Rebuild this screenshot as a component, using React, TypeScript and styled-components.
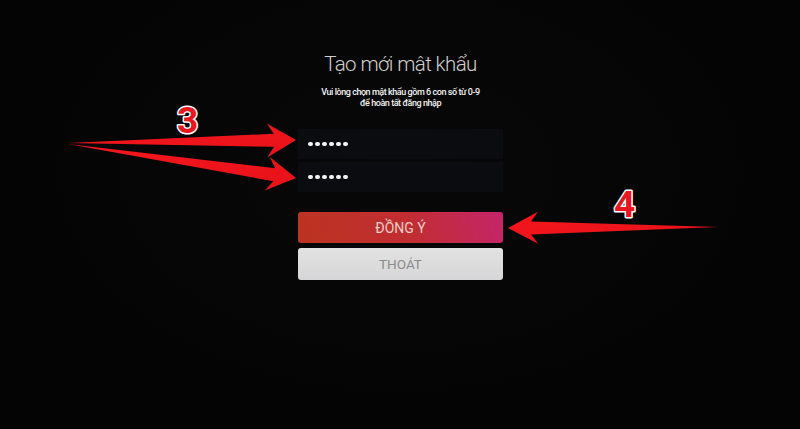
import React from 'react'
import styled, { createGlobalStyle } from 'styled-components'

const GlobalStyle = createGlobalStyle`
  html, body {
    margin: 0;
    padding: 0;
    background: #040404;
  }
  body {
    font-family: Roboto, "Noto Sans", sans-serif;
  }
`

const Screen = styled.div`
  position: relative;
  width: 800px;
  height: 429px;
  overflow: hidden;
  background: radial-gradient(ellipse at 50% 40%, #080808 0%, #040404 70%);
  display: flex;
  flex-direction: column;
  align-items: center;
  padding-top: 50px;
  box-sizing: border-box;
`

const Panel = styled.div`
  width: 205px;
  display: flex;
  flex-direction: column;
  align-items: center;
  margin-left: 1px;
`

const Title = styled.h1`
  margin: 0;
  font-size: 20.5px;
  font-weight: 300;
  line-height: 28px;
  letter-spacing: -0.6px;
  color: #cfcfcf;
  white-space: nowrap;
`

const Subtitle = styled.p`
  margin: 9px 0 0;
  font-size: 9px;
  font-weight: 500;
  line-height: 11px;
  letter-spacing: -0.45px;
  color: #f2f2f2;
  text-align: center;
  white-space: nowrap;
`

const Fields = styled.div`
  width: 100%;
  display: flex;
  flex-direction: column;
  gap: 3px;
  margin-top: 20px;
`

const Field = styled.div`
  height: 30px;
  background: #0a0c0f;
  display: flex;
  align-items: center;
  padding-left: 10px;
  gap: 2.4px;
`

const Dot = styled.span`
  width: 4.6px;
  height: 4.6px;
  border-radius: 50%;
  background: #f4f4f4;
`

const Actions = styled.div`
  width: 100%;
  display: flex;
  flex-direction: column;
  gap: 5px;
  margin-top: 20px;
`

const Button = styled.button<{ $primary?: boolean }>`
  height: ${p => (p.$primary ? 31 : 32)}px;
  border: none;
  border-radius: 3px;
  padding: 0;
  font-family: Roboto, "Noto Sans", sans-serif;
  font-size: ${p => (p.$primary ? 14 : 13.5)}px;
  font-weight: 400;
  color: ${p => (p.$primary ? '#f3cfc6' : '#8a8a8a')};
  background: ${p =>
    p.$primary
      ? 'linear-gradient(75deg, #bb3320 0%, #c12d33 55%, #c4256a 100%)'
      : 'linear-gradient(180deg, #e2e2e2 0%, #d6d6d8 100%)'};
`

const Overlay = styled.svg`
  position: absolute;
  left: 0;
  top: 0;
  width: 800px;
  height: 429px;
  pointer-events: none;
`

const Label = styled.text`
  font-family: Roboto, "DejaVu Sans", sans-serif;
  font-weight: 700;
  font-size: 37px;
  fill: #e8161f;
  stroke: #ffffff;
  stroke-width: 3px;
  paint-order: stroke;
  stroke-linejoin: round;
`

const Arrow: React.FC<{ x1: number; y1: number; x2: number; y2: number; head?: number; width?: number }> = ({
  x1, y1, x2, y2, head = 29, width = 17,
}) => {
  const dx = x2 - x1
  const dy = y2 - y1
  const len = Math.hypot(dx, dy)
  const ux = dx / len
  const uy = dy / len
  const nx = -uy
  const ny = ux
  const bx = x2 - ux * head
  const by = y2 - uy * head
  const sx = x2 - ux * (head - 7)
  const sy = y2 - uy * (head - 7)
  const shaft = 6.5
  const pts = [
    [x1, y1],
    [sx + nx * shaft, sy + ny * shaft],
    [bx + nx * width, by + ny * width],
    [x2, y2],
    [bx - nx * width, by - ny * width],
    [sx - nx * shaft, sy - ny * shaft],
  ]
  return <polygon points={pts.map(p => p.join(',')).join(' ')} fill="url(#arrowFill)" />
}

const App: React.FC = () => {
  const dots = [0, 1, 2, 3, 4, 5]
  return (
    <>
      <GlobalStyle />
      <Screen>
        <Panel>
          <Title>Tạo mới mật khẩu</Title>
          <Subtitle>
            Vui lòng chọn mật khẩu gồm 6 con số từ 0-9
            <br />
            để hoàn tất đăng nhập
          </Subtitle>
          <Fields>
            <Field>
              {dots.map(i => <Dot key={i} />)}
            </Field>
            <Field>
              {dots.map(i => <Dot key={i} />)}
            </Field>
          </Fields>
          <Actions>
            <Button $primary>ĐỒNG Ý</Button>
            <Button>THOÁT</Button>
          </Actions>
        </Panel>

        <Overlay viewBox="0 0 800 429">
          <defs>
            <linearGradient id="arrowFill" x1="0" y1="0" x2="1" y2="1">
              <stop offset="0%" stopColor="#f4161c" />
              <stop offset="100%" stopColor="#e8121a" />
            </linearGradient>
          </defs>
          <Arrow x1={68} y1={143} x2={296} y2={140} />
          <Arrow x1={68} y1={144} x2={296} y2={178} />
          <Arrow x1={718} y1={227} x2={508} y2={228} head={30} width={16} />
          <Label x={177} y={133}>3</Label>
          <Label x={614} y={217}>4</Label>
        </Overlay>
      </Screen>
    </>
  )
}

export default App
